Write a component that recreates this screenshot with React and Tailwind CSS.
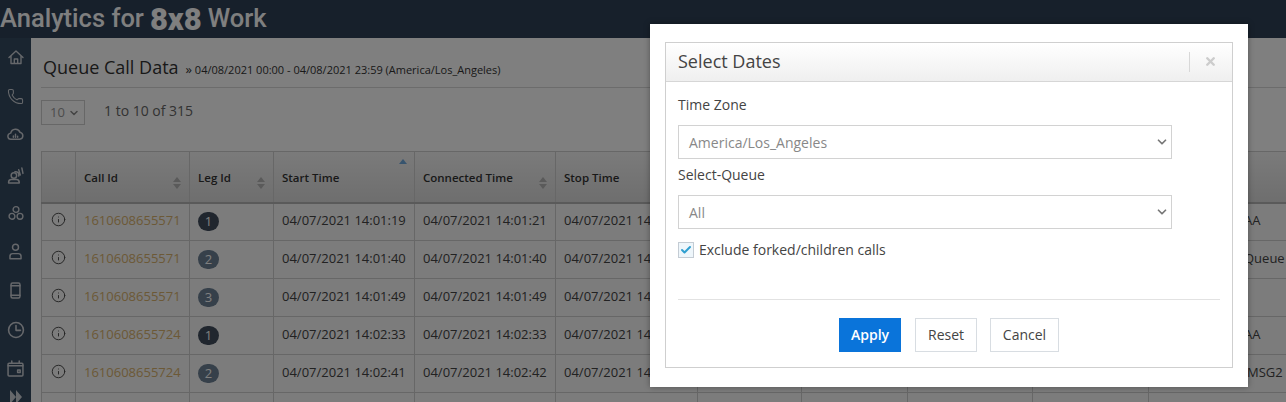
import { ChevronDown, Info, Phone, Check, X } from 'lucide-react';

const COLUMNS = [
  { label: '', width: 'w-[34px]' },
  { label: 'Call Id', width: 'w-[114px]' },
  { label: 'Leg Id', width: 'w-[84px]' },
  { label: 'Start Time', width: 'w-[141px]', sorted: true },
  { label: 'Connected Time', width: 'w-[141px]' },
  { label: 'Stop Time', width: 'w-[142px]' },
  { label: '', width: 'w-[104px]' },
  { label: '', width: 'w-[106px]' },
  { label: '', width: 'w-[125px]' },
  { label: '', width: 'w-[116px]' },
  { label: '', width: 'w-[200px]', plain: true },
];

const ROWS = [
  { id: '1610608655571', leg: 1, start: '04/07/2021 14:01:19', connected: '04/07/2021 14:01:21', stop: '04/07/2021 14:01:40', last: 'AA', pad: 'pl-[95px]' },
  { id: '1610608655571', leg: 2, start: '04/07/2021 14:01:40', connected: '04/07/2021 14:01:40', stop: '04/07/2021 14:01:49', last: 'Queue', pad: 'pl-[95px]' },
  { id: '1610608655571', leg: 3, start: '04/07/2021 14:01:49', connected: '04/07/2021 14:01:49', stop: '04/07/2021 14:02:10', last: '', pad: 'pl-[95px]' },
  { id: '1610608655724', leg: 1, start: '04/07/2021 14:02:33', connected: '04/07/2021 14:02:33', stop: '04/07/2021 14:02:41', last: 'AA', pad: 'pl-[95px]' },
  { id: '1610608655724', leg: 2, start: '04/07/2021 14:02:41', connected: '04/07/2021 14:02:42', stop: '04/07/2021 14:03:02', last: 'MSG2', pad: 'pl-[98px]' },
];

function SortArrows({ sorted }) {
  if (sorted) {
    return <span className="absolute right-[7px] top-[7px] h-0 w-0 border-x-4 border-b-[5px] border-x-transparent border-b-[#6fa8dc]" />;
  }
  return (
    <span className="absolute right-[8px] top-[25px] flex flex-col gap-[2px]">
      <span className="h-0 w-0 border-x-4 border-b-[5px] border-x-transparent border-b-[#b4b4b4]" />
      <span className="h-0 w-0 border-x-4 border-t-[5px] border-x-transparent border-t-[#b4b4b4]" />
    </span>
  );
}

function Glyph({ size = 16, children }) {
  return (
    <svg width={size} height={size} viewBox="0 0 16 16" fill="none" stroke="currentColor" strokeWidth="1.4" strokeLinejoin="round" strokeLinecap="round">
      {children}
    </svg>
  );
}

function Sidebar() {
  const icons = [
    {
      key: 'home',
      gap: 'mt-[11px]',
      node: (
        <Glyph>
          <path d="M1 8.5 8 2l7 6.5M3 7v7.5h10V7M6.3 14.5V10h3.4v4.5" />
        </Glyph>
      ),
    },
    { key: 'phone', gap: 'mt-[23px]', node: <Phone size={17} strokeWidth={1.5} /> },
    {
      key: 'cloud',
      gap: 'mt-[21px]',
      node: (
        <Glyph size={17}>
          <path d="M4 12.5a2.9 2.9 0 0 1-.5-5.8A4.6 4.6 0 0 1 12.3 6a3.3 3.3 0 0 1-.3 6.5z" />
          <path d="M6 10.5V9.3M8 10.5V7.8M10 10.5V9.6" />
        </Glyph>
      ),
    },
    {
      key: 'users',
      gap: 'mt-[24px]',
      node: (
        <Glyph size={17}>
          <circle cx="6.5" cy="8" r="2.6" />
          <path d="M1.5 15v-.8a2.6 2.6 0 0 1 2.6-2.4h4.8a2.6 2.6 0 0 1 2.6 2.4v.8z" />
          <path d="M7.5 4.5a3 3 0 0 1 3.5 4M11 2.5l1.5 5M14 1l1 5" />
        </Glyph>
      ),
    },
    {
      key: 'group',
      gap: 'mt-[21px]',
      node: (
        <Glyph>
          <circle cx="8" cy="4.5" r="2.9" />
          <circle cx="4" cy="11.3" r="2.9" />
          <circle cx="12" cy="11.3" r="2.9" />
        </Glyph>
      ),
    },
    {
      key: 'user',
      gap: 'mt-[22px]',
      node: (
        <Glyph size={17}>
          <circle cx="8" cy="4" r="2.8" />
          <path d="M2.8 14.8v-2.3A2.5 2.5 0 0 1 5.3 10h5.4a2.5 2.5 0 0 1 2.5 2.5v2.3z" />
        </Glyph>
      ),
    },
    {
      key: 'mobile',
      gap: 'mt-[22px]',
      node: (
        <Glyph size={17}>
          <rect x="3.8" y="1" width="8.4" height="14" rx="1.4" />
          <path d="M3.8 3.5h8.4M3.8 12.5h8.4" />
        </Glyph>
      ),
    },
    {
      key: 'clock',
      gap: 'mt-[22px]',
      node: (
        <Glyph size={18}>
          <circle cx="8" cy="8" r="6.6" />
          <path d="M8 4v4.3h4" />
        </Glyph>
      ),
    },
    {
      key: 'calendar',
      gap: 'mt-[22px]',
      node: (
        <Glyph size={17}>
          <rect x="1" y="3" width="14" height="12" rx="1" />
          <path d="M1 5.5h14M4.5 1v2M11.5 1v2" />
          <rect x="10" y="9.5" width="2.4" height="2.2" />
        </Glyph>
      ),
    },
    {
      key: 'forward',
      gap: 'mt-[12px]',
      node: (
        <svg width="12" height="16" viewBox="0 0 12 16" fill="currentColor">
          <path d="M0 1l6 7-6 7zM6 1l6 7-6 7z" />
        </svg>
      ),
    },
  ];
  return (
    <aside className="flex w-[31px] shrink-0 flex-col items-center bg-[#344a60] text-[#ccd0d6]">
      {icons.map((icon) => (
        <span key={icon.key} className={`flex h-[17px] items-center justify-center ${icon.gap}`}>
          {icon.node}
        </span>
      ))}
    </aside>
  );
}

function CallTable() {
  return (
    <table className="w-[1307px] table-fixed border-collapse text-[13px] text-[#444]">
      <colgroup>
        {COLUMNS.map((col, index) => (
          <col key={index} className={col.width} />
        ))}
      </colgroup>
      <thead>
        <tr className="h-[51px] bg-gradient-to-b from-[#f6f6f6] to-[#dcdcdc]">
          {COLUMNS.map((col, index) => (
            <th key={index} className="relative border border-b-2 border-[#cfcfcf] border-b-[#b4b4b4] pl-2 pt-[2px] text-left text-[11.5px] font-semibold text-[#333]">
              {col.label}
              {index > 0 && !col.plain ? <SortArrows sorted={col.sorted} /> : null}
            </th>
          ))}
        </tr>
      </thead>
      <tbody className="bg-[#f8f8f8]">
        {ROWS.map((row, index) => (
          <tr key={index} className="h-[38px]">
            <td className="border border-[#cfcfcf] pr-[1px] text-center">
              <Info size={15} strokeWidth={1.5} className="mx-auto -mt-1 text-[#444]" />
            </td>
            <td className="border border-[#cfcfcf] pb-[2px] pl-2 text-[#d9b36e]">{row.id}</td>
            <td className="border border-[#cfcfcf] pl-2">
              <span className={`flex h-[19px] w-[21px] items-center justify-center rounded-full text-[13px] text-white ${row.leg === 1 ? 'bg-[#404c5c]' : 'bg-[#6c8094]'}`}>
                {row.leg}
              </span>
            </td>
            <td className="border border-[#cfcfcf] pb-[2px] pl-2">{row.start}</td>
            <td className="border border-[#cfcfcf] pb-[2px] pl-2">{row.connected}</td>
            <td className="border border-[#cfcfcf] pb-[2px] pl-2">{row.stop}</td>
            <td className="border border-[#cfcfcf]" />
            <td className="border border-[#cfcfcf]" />
            <td className="border border-[#cfcfcf]" />
            <td className="border border-[#cfcfcf]" />
            <td className={`border border-[#cfcfcf] pb-[2px] ${row.pad}`}>{row.last}</td>
          </tr>
        ))}
        <tr className="h-[38px]">
          {COLUMNS.map((col, index) => (
            <td key={index} className="border border-[#cfcfcf]" />
          ))}
        </tr>
      </tbody>
    </table>
  );
}

function ModalSelect({ value }) {
  return (
    <div className="flex h-[34px] w-[494px] items-center justify-between border border-[#d2d2d2] bg-white pl-[10px] pr-[2px] text-[14px] text-[#888]">
      <span>{value}</span>
      <ChevronDown size={14} strokeWidth={3} className="text-[#777]" />
    </div>
  );
}

function DatesModal() {
  return (
    <div className="absolute left-[650px] top-[24px] h-[363px] w-[598px] bg-white px-[15px] pb-[19px] pt-[18px] shadow-[0_0_6px_rgba(0,0,0,0.35)]">
      <div className="flex h-full flex-col border border-[#cfcfcf]">
        <div className="flex h-[39px] shrink-0 items-center border-b border-[#d6d6d6] bg-gradient-to-b from-white to-[#efefef] pb-[1px] pl-3">
          <h2 className="text-[18px] text-[#444]">Select Dates</h2>
          <span className="ml-auto h-[20px] w-px bg-[#d8d8d8]" />
          <X size={13} strokeWidth={4.5} className="ml-[14px] mr-[15px] text-[#ccc]" />
        </div>
        <div className="flex flex-1 flex-col px-3">
          <label className="mt-[13px] text-[14px] leading-[20px] text-[#444]">Time Zone</label>
          <div className="mt-[10px]">
            <ModalSelect value="America/Los_Angeles" />
          </div>
          <label className="mt-[6px] text-[14px] leading-[20px] text-[#444]">Select-Queue</label>
          <div className="mt-[10px]">
            <ModalSelect value="All" />
          </div>
          <div className="mt-[13px] flex items-center gap-[5px] text-[14px] leading-[16px] text-[#444]">
            <span className="flex h-[16px] w-[16px] items-center justify-center border border-[#c4ccd4] bg-[#eef6fb]">
              <Check size={12} strokeWidth={4} className="text-[#2f9fd0]" />
            </span>
            Exclude forked/children calls
          </div>
          <div className="mt-[41px] border-t border-[#e2e2e2]" />
          <div className="mt-[18px] flex">
            <button type="button" className="ml-[161px] h-[34px] w-[62px] bg-[#0a74da] pb-[2px] text-[14px] font-semibold text-white">Apply</button>
            <button type="button" className="ml-[14px] h-[34px] w-[62px] border border-[#d8dde2] pb-[2px] text-[14px] text-[#444]">Reset</button>
            <button type="button" className="ml-[13px] h-[34px] w-[69px] border border-[#d8dde2] pb-[2px] text-[14px] text-[#444]">Cancel</button>
          </div>
        </div>
      </div>
    </div>
  );
}

export default function App() {
  return (
    <div className="relative h-[402px] w-[1286px] overflow-hidden bg-white font-['Open_Sans',sans-serif]">
      <header className="flex h-[38px] items-center bg-[#2e4056] font-['Roboto',sans-serif] text-[25.5px] font-medium leading-none text-white">
        <span>Analytics for</span>
        <span className="ml-[6px] text-[31px] font-black">8x8</span>
        <span className="ml-[6px]">Work</span>
      </header>

      <div className="flex h-[364px]">
        <Sidebar />
        <main className="min-w-0 flex-1 bg-white pl-[10px]">
          <div className="flex h-[50px] items-center gap-[7px] border-b border-[#d8d8d8] pl-[2px] pt-[10px]">
            <h1 className="text-[18px] text-[#333]">Queue Call Data</h1>
            <span className="mt-[5px] text-[11px] text-[#333]">
              <span className="text-[13px]">»</span> 04/08/2021 00:00 - 04/08/2021 23:59 (America/Los_Angeles)
            </span>
          </div>
          <div className="flex h-[63px] items-start pt-[12px]">
            <div className="flex h-[25px] w-[44px] items-center justify-between border border-[#cfcfcf] pl-2 pr-1 text-[13px] text-[#999]">
              10
              <ChevronDown size={12} strokeWidth={3} className="text-[#888]" />
            </div>
            <span className="ml-[19px] text-[14px] text-[#666]">1 to 10 of 315</span>
          </div>
          <CallTable />
        </main>
      </div>

      <div className="absolute inset-0 bg-black/50" />
      <DatesModal />
    </div>
  );
}
